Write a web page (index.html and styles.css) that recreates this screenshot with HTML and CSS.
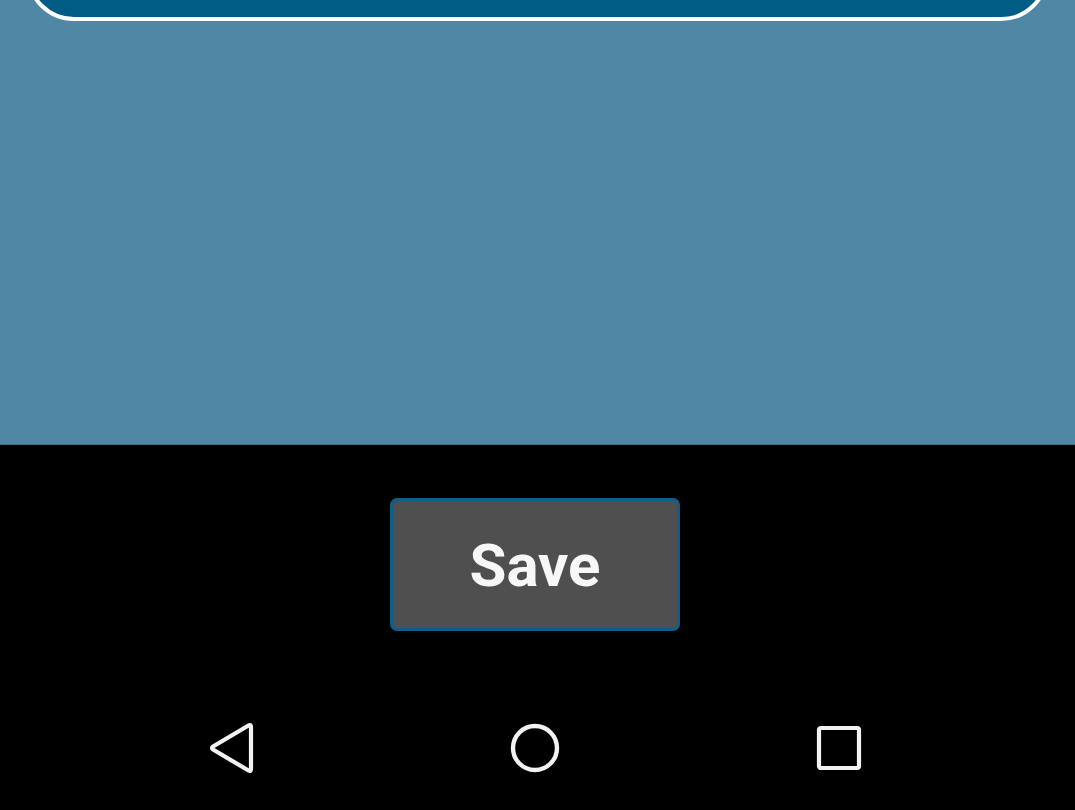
FILE: index.html
```html
<!DOCTYPE html>
<html>
<head>
<meta charset="utf-8">
<link rel="stylesheet" href="styles.css">
</head>
<body>
<div class="app">
  <section class="content">
    <div class="card"></div>
  </section>
  <section class="footer">
    <div class="actions">
      <button class="save">Save</button>
    </div>
    <nav class="navbar">
      <svg class="nav-icon" width="48" height="52" viewBox="0 0 48 52">
        <path d="M44 5 L44 47 Q44 50 41.5 48.5 L6 27.5 Q4 26 6 24.5 L41.5 3.5 Q44 2 44 5 Z" fill="none" stroke="#f2f2f2" stroke-width="4.2" stroke-linejoin="round"/>
      </svg>
      <svg class="nav-icon" width="52" height="52" viewBox="0 0 52 52">
        <circle cx="26" cy="26" r="22" fill="none" stroke="#f2f2f2" stroke-width="4.4"/>
      </svg>
      <svg class="nav-icon" width="48" height="48" viewBox="0 0 48 48">
        <rect x="4" y="4" width="40" height="40" rx="2" fill="none" stroke="#f2f2f2" stroke-width="4.2"/>
      </svg>
    </nav>
  </section>
</div>
</body>
</html>
```

FILE: styles.css
```css
* { box-sizing: border-box; }
html, body { margin: 0; padding: 0; }
body {
  width: 1075px;
  height: 810px;
  overflow: hidden;
  background: #000;
  font-family: Roboto, "Liberation Sans", sans-serif;
}
.app {
  display: flex;
  flex-direction: column;
  height: 810px;
}
.content {
  height: 445px;
  background: #4f87a5;
  border-bottom: 1px solid #3d6a83;
  overflow: hidden;
}
.card {
  margin: -79px 26px 0 26px;
  height: 100px;
  background: #005c84;
  border: 4px solid #ffffff;
  border-radius: 0 0 48px 48px;
}
.footer {
  flex: 1;
  display: flex;
  flex-direction: column;
  background: #000;
}
.actions {
  display: flex;
  justify-content: center;
  padding-top: 53px;
  padding-right: 5px;
}
.save {
  width: 290px;
  height: 133px;
  background: #4f4f4f;
  border: 3.5px solid #0d5f85;
  border-radius: 7px;
  color: #f7f7f7;
  font-family: Roboto, "Liberation Sans", sans-serif;
  font-weight: 700;
  font-size: 60px;
  padding: 0;
  padding-top: 2px;
}
.navbar {
  flex: 1;
  display: flex;
  justify-content: center;
  align-items: center;
  gap: 254px;
  padding-top: 54px;
  padding-right: 5px;
}
.nav-icon { display: block; }
```
